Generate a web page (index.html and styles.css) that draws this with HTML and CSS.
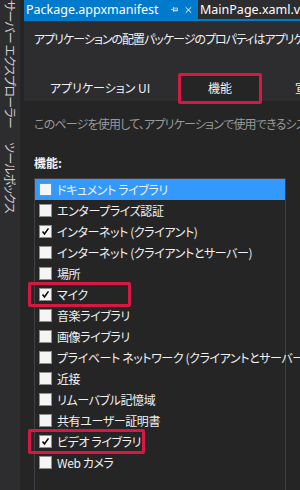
FILE: index.html
```html
<!DOCTYPE html>
<html lang="ja">
<head>
<meta charset="utf-8">
<link rel="stylesheet" href="styles.css">
</head>
<body>
<div class="app">
  <aside class="sidebar">
    <span class="vtab">サーバー エクスプローラー</span>
    <span class="vtab">ツールボックス</span>
  </aside>
  <main class="editor">
    <div class="doc-tabs">
      <div class="doc-tab active">
        <span class="doc-title">Package.appxmanifest</span>
        <svg class="pin" width="11" height="9" viewBox="0 0 11 9"><path d="M0 4.5H3.5M3.5 1V8M3.5 2.5H9.5V6.5H3.5M3.5 5.5H9.5" fill="none" stroke="#fff" stroke-width="1"/></svg>
        <svg class="close" width="10" height="10" viewBox="0 0 10 10"><path d="M1 1L9 9M9 1L1 9" stroke="#fff" stroke-width="1.4"/></svg>
      </div>
      <div class="doc-tab">
        <span class="doc-title">MainPage.xaml.vb</span>
      </div>
    </div>
    <div class="doc-body">
      <header class="manifest-head">
        <p class="intro">アプリケーションの配置パッケージのプロパティはアプリケーション マニフェスト ファイルで設定します。</p>
        <nav class="page-tabs">
          <span class="page-tab first">アプリケーション UI</span>
          <span class="page-tab active">機能</span>
          <span class="page-tab">宣言</span>
        </nav>
      </header>
      <section class="content">
        <p class="desc">このページを使用して、アプリケーションで使用できるシステム機能またはデバイスを指定します。</p>
        <h3 class="caps-title">機能:</h3>
        <ul class="cap-list">
          <li class="cap selected"><span class="box"></span><span>ドキュメント ライブラリ</span></li>
          <li class="cap"><span class="box"></span><span>エンタープライズ認証</span></li>
          <li class="cap"><span class="box checked"><svg viewBox="0 0 13 13"><path d="M3 6.5L5.3 9.5L10 2.8" fill="none" stroke="#000" stroke-width="1.8"/></svg></span><span>インターネット (クライアント)</span></li>
          <li class="cap"><span class="box"></span><span>インターネット (クライアントとサーバー)</span></li>
          <li class="cap"><span class="box"></span><span>場所</span></li>
          <li class="cap mark mark-mic"><span class="box checked"><svg viewBox="0 0 13 13"><path d="M3 6.5L5.3 9.5L10 2.8" fill="none" stroke="#000" stroke-width="1.8"/></svg></span><span>マイク</span></li>
          <li class="cap"><span class="box"></span><span>音楽ライブラリ</span></li>
          <li class="cap"><span class="box"></span><span>画像ライブラリ</span></li>
          <li class="cap"><span class="box"></span><span>プライベート ネットワーク (クライアントとサーバー)</span></li>
          <li class="cap"><span class="box"></span><span>近接</span></li>
          <li class="cap"><span class="box"></span><span>リムーバブル記憶域</span></li>
          <li class="cap"><span class="box"></span><span>共有ユーザー証明書</span></li>
          <li class="cap mark mark-video"><span class="box checked"><svg viewBox="0 0 13 13"><path d="M3 6.5L5.3 9.5L10 2.8" fill="none" stroke="#000" stroke-width="1.8"/></svg></span><span>ビデオ ライブラリ</span></li>
          <li class="cap"><span class="box"></span><span>Web カメラ</span></li>
        </ul>
      </section>
    </div>
  </main>
</div>
</body>
</html>
```

FILE: styles.css
```css
* { box-sizing: border-box; }
html, body { margin: 0; padding: 0; }
body {
  width: 300px;
  height: 490px;
  overflow: hidden;
  background: #252526;
  font-family: "Noto Sans CJK JP", sans-serif;
  font-feature-settings: "palt";
  font-size: 12px;
  color: #f1f1f1;
}
.app {
  display: flex;
  height: 490px;
}
.sidebar {
  width: 20px;
  flex: none;
  background: #2d2d30;
  display: flex;
  flex-direction: column;
  align-items: center;
  gap: 14px;
  overflow: hidden;
}
.vtab {
  writing-mode: vertical-rl;
  text-orientation: sideways;
  font-size: 12px;
  line-height: 14px;
  letter-spacing: -0.8px;
  color: #d0d0d0;
  white-space: nowrap;
}
.editor {
  flex: 1;
  margin-left: 4px;
  display: flex;
  flex-direction: column;
  min-width: 0;
  overflow: hidden;
}
.doc-tabs {
  display: flex;
  height: 21px;
  border-bottom: 2px solid #007acc;
  background: #2d2d30;
  flex: none;
}
.doc-tab {
  display: flex;
  align-items: center;
  height: 19px;
  padding: 0 6px 0 2px;
  background: #2d2d30;
  white-space: nowrap;
  flex: none;
}
.doc-tab.active {
  background: #007acc;
  width: 174px;
  padding-left: 2px;
}
.doc-title {
  font-family: "Noto Sans", sans-serif;
  font-feature-settings: normal;
  font-size: 12.5px;
  color: #fff;
}
.pin { margin-left: 12px; }
.close { margin-left: 7px; }
.doc-body {
  flex: 1;
  display: flex;
  flex-direction: column;
}
.manifest-head {
  background: #2d2d30;
  padding: 10px 0 0 10px;
  height: 80px;
  flex: none;
}
.intro {
  margin: 0;
  line-height: 16px;
  letter-spacing: -1px;
  white-space: nowrap;
  color: #f1f1f1;
}
.page-tabs {
  display: flex;
  gap: 14px;
  margin-top: 27px;
  height: 27px;
}
.page-tab {
  display: flex;
  align-items: center;
  justify-content: center;
  padding: 0 21px;
  height: 27px;
  white-space: nowrap;
  color: #f1f1f1;
  position: relative;
}
.page-tab.first {
  width: 132px;
  flex: none;
}
.page-tab.active {
  background: #252526;
  width: 80px;
  flex: none;
}
.page-tab.active::after {
  content: "";
  position: absolute;
  left: -2px;
  right: -2px;
  top: -1px;
  bottom: -3px;
  border: 3px solid #d41a44;
  border-radius: 2px;
}
.content {
  padding: 15px 0 0 10px;
  flex: 1;
}
.desc {
  margin: 0;
  line-height: 16px;
  letter-spacing: -0.8px;
  color: #999999;
  white-space: nowrap;
}
.caps-title {
  margin: 23px 0 0;
  font-size: 12px;
  line-height: 16px;
  font-weight: bold;
  color: #f1f1f1;
}
.cap-list {
  list-style: none;
  margin: 7px 0 0;
  padding: 0;
  width: 252px;
  height: 320px;
  border: 1px solid #3f3f46;
  border-bottom: none;
}
.cap {
  display: flex;
  align-items: center;
  gap: 5px;
  height: 21px;
  padding-left: 4px;
  white-space: nowrap;
  letter-spacing: -0.4px;
  position: relative;
}
.cap.selected { background: #3399ff; }
.box {
  width: 13px;
  height: 13px;
  flex: none;
  background: #f5f5f5;
  border: 1px solid #8e8e8e;
  display: flex;
}
.box svg { width: 11px; height: 11px; }
.mark::after {
  content: "";
  position: absolute;
  left: -7px;
  top: -2px;
  bottom: -2px;
  border: 3px solid #d41a44;
  border-radius: 2px;
}
.mark-mic::after { width: 97px; }
.mark-video::after { width: 111px; }
```
